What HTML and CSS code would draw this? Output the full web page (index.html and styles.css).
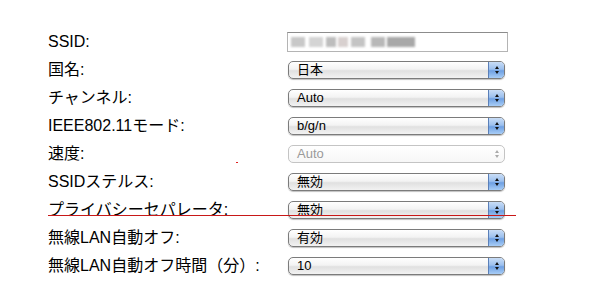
FILE: index.html
```html
<!DOCTYPE html>
<html lang="ja">
<head>
  <meta charset="UTF-8" />
  <title>無線設定</title>
  <link rel="stylesheet" href="styles.css">
</head>
<body>
  <div class="form">
    <div class="row">
      <label>SSID:</label>
      <div class="textbox">
        <span class="blur b1"></span><span class="blur b2"></span><span class="blur b3"></span><span class="blur b4"></span><span class="blur b5"></span><span class="blur b6"></span><span class="blur b7"></span>
      </div>
    </div>
    <div class="row">
      <label>国名:</label>
      <div class="select"><span class="value">日本</span><span class="arrows"><i class="up"></i><i class="down"></i></span></div>
    </div>
    <div class="row">
      <label>チャンネル:</label>
      <div class="select"><span class="value">Auto</span><span class="arrows"><i class="up"></i><i class="down"></i></span></div>
    </div>
    <div class="row">
      <label>IEEE802.11モード:</label>
      <div class="select"><span class="value">b/g/n</span><span class="arrows"><i class="up"></i><i class="down"></i></span></div>
    </div>
    <div class="row">
      <label>速度:</label>
      <span class="speck"></span>
      <div class="select disabled"><span class="value">Auto</span><span class="arrows"><i class="up"></i><i class="down"></i></span></div>
    </div>
    <div class="row">
      <label>SSIDステルス:</label>
      <div class="select"><span class="value">無効</span><span class="arrows"><i class="up"></i><i class="down"></i></span></div>
    </div>
    <div class="row marked">
      <label>プライバシーセパレータ:</label>
      <div class="select"><span class="value">無効</span><span class="arrows"><i class="up"></i><i class="down"></i></span></div>
    </div>
    <div class="row">
      <label>無線LAN自動オフ:</label>
      <div class="select"><span class="value">有効</span><span class="arrows"><i class="up"></i><i class="down"></i></span></div>
    </div>
    <div class="row">
      <label>無線LAN自動オフ時間（分）:</label>
      <div class="select"><span class="value">10</span><span class="arrows"><i class="up"></i><i class="down"></i></span></div>
    </div>
  </div>
</body>
</html>
```

FILE: styles.css
```css
body {
  margin: 0;
  background: #ffffff;
  font-family: "Liberation Sans", "Noto Sans CJK JP", sans-serif;
  color: #000000;
}

.form {
  padding: 28px 0 0 48px;
}

.row {
  position: relative;
  display: flex;
  align-items: center;
  height: 28px;
}

.row label {
  width: 240px;
  font-size: 16px;
  line-height: 20px;
}

/* text input with blurred SSID */
.textbox {
  box-sizing: border-box;
  width: 221px;
  height: 20px;
  border: 1px solid #b4b4b4;
  border-top-color: #8c8c8c;
  background: #fff;
  display: flex;
  align-items: center;
  padding-left: 3px;
  margin-left: -1px;
}

.blur {
  display: inline-block;
  height: 10px;
  filter: blur(1px);
}
.b1 { width: 14px; background: #c8c8c8; }
.b2 { width: 14px; background: #d4d4d4; margin-left: 4px; }
.b3 { width: 10px; background: #bdbdbd; margin-left: 3px; }
.b4 { width: 10px; background: #d8d0cf; margin-left: 2px; }
.b5 { width: 14px; background: #c4c4c4; margin-left: 3px; }
.b6 { width: 14px; background: #b8b8b8; margin-left: 6px; }
.b7 { width: 28px; background: #a8a8a8; margin-left: 2px; }

/* mac style popup */
.select {
  box-sizing: border-box;
  width: 217px;
  height: 18px;
  border: 1px solid #7b7b7b;
  border-radius: 5px;
  background: linear-gradient(#ffffff 0%, #f3f3f3 45%, #e0e0e0 55%, #f2f2f2 100%);
  box-shadow: 0 1px 1px rgba(0, 0, 0, 0.25);
  display: flex;
  align-items: center;
  overflow: hidden;
}

.select .value {
  flex: 1;
  padding-left: 8px;
  font-size: 13px;
  line-height: 16px;
}

.arrows {
  width: 15px;
  height: 16px;
  border-left: 1px solid #5a7fb8;
  background: linear-gradient(#c9ddf6 0%, #9cc0ee 45%, #6ea0e3 55%, #a8cdf6 100%);
  display: flex;
  flex-direction: column;
  align-items: center;
  justify-content: center;
  gap: 2px;
}

.arrows i {
  display: block;
  width: 0;
  height: 0;
  border-left: 2.5px solid transparent;
  border-right: 2.5px solid transparent;
}
.arrows .up { border-bottom: 3px solid #111; }
.arrows .down { border-top: 3px solid #111; }

.select.disabled {
  border-color: #c4c4c4;
  box-shadow: none;
  background: linear-gradient(#ffffff, #f7f7f7);
}
.select.disabled .value { color: #9a9a9a; }
.select.disabled .arrows {
  background: none;
  border-left: none;
}
.select.disabled .arrows .up { border-bottom-color: #aaa; }
.select.disabled .arrows .down { border-top-color: #aaa; }

/* stray marks */
.speck {
  position: absolute;
  left: 188px;
  top: 22px;
  width: 2px;
  height: 1px;
  background: #e02020;
}

.row.marked::after {
  content: "";
  position: absolute;
  left: 0;
  top: 19px;
  width: 468px;
  height: 1px;
  background: #c81818;
}
```
